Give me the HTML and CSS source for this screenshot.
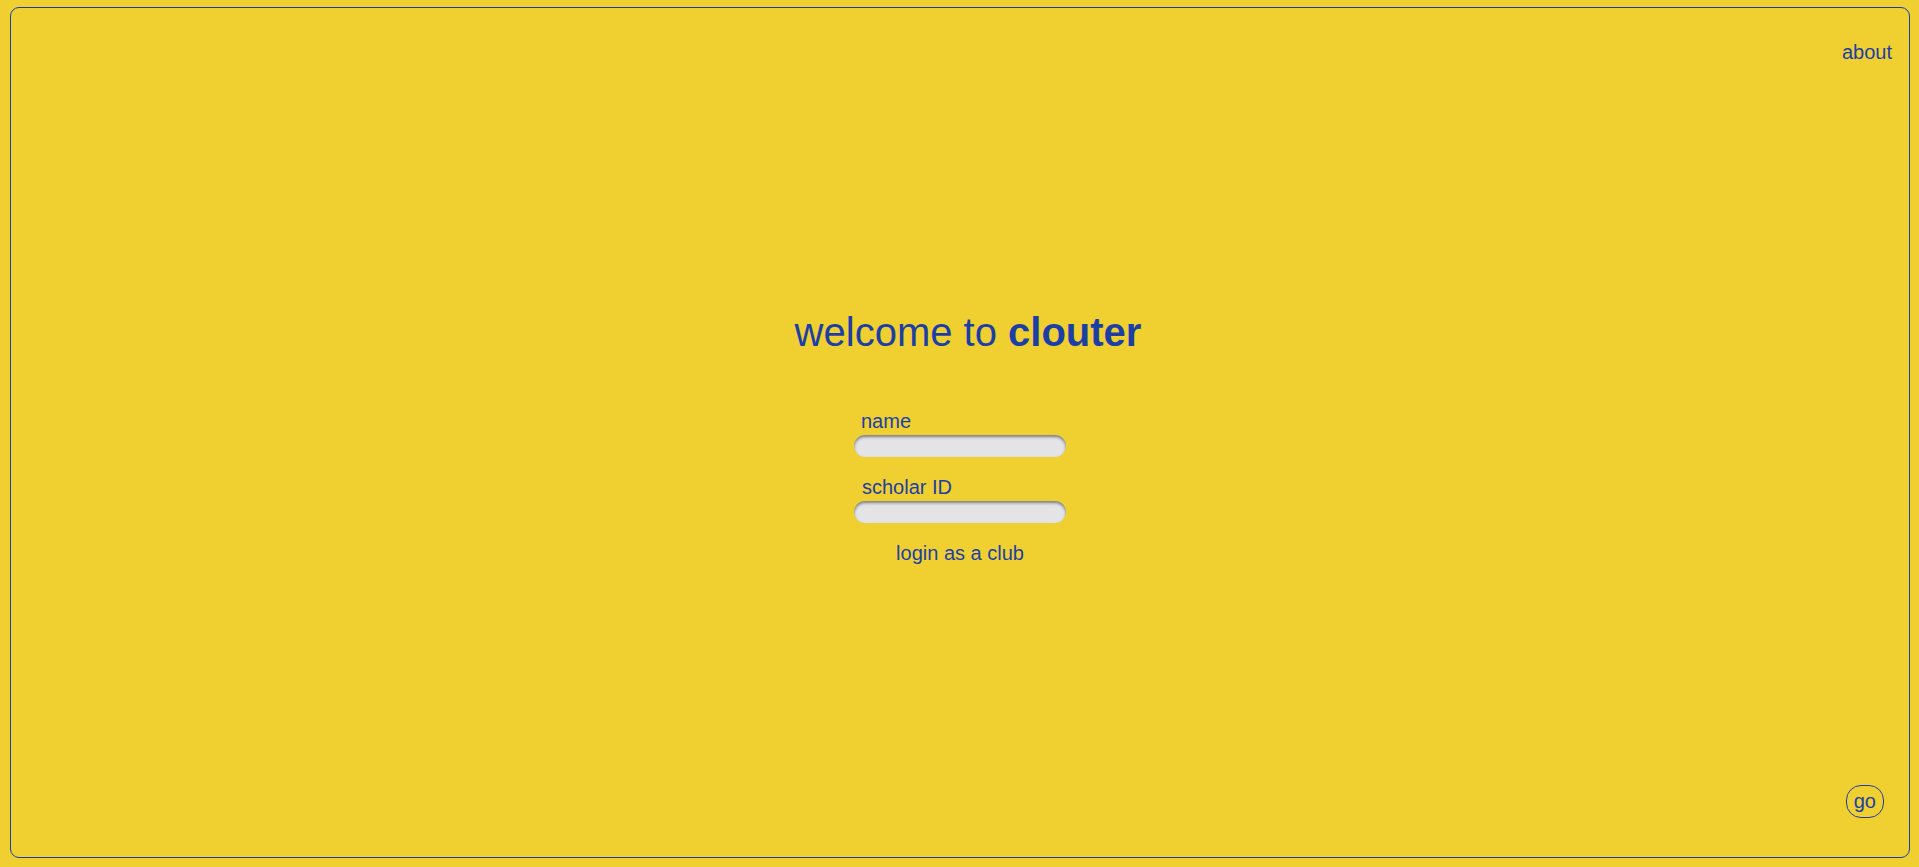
FILE: index.html
```html
<!DOCTYPE html>
<html lang="en">
<head>
<meta charset="utf-8">
<title>clouter</title>
<link rel="stylesheet" href="styles.css">
</head>
<body>
<div class="frame">
  <div class="top">
    <a class="about" href="#">about</a>
  </div>
  <main class="main">
    <h1 class="title">welcome to <b>clouter</b></h1>
    <form class="form">
      <label class="label label-name" for="name">name</label>
      <input class="field" id="name" type="text">
      <label class="label label-id" for="sid">scholar ID</label>
      <input class="field" id="sid" type="text">
      <a class="club" href="#">login as a club</a>
    </form>
  </main>
  <div class="bottom">
    <button class="go" type="button">go</button>
  </div>
</div>
</body>
</html>
```

FILE: styles.css
```css
html, body {
  margin: 0;
  padding: 0;
  background: #f0cf31;
}
body {
  font-family: "Liberation Sans", Arial, sans-serif;
  color: #1c3fa6;
  padding: 7px 9px 9px 10px;
  height: 867px;
  box-sizing: border-box;
  overflow: hidden;
}
.frame {
  height: 851px;
  box-sizing: border-box;
  border: 1px solid #1c3fa6;
  border-radius: 9px;
  display: flex;
  flex-direction: column;
}
.top {
  display: flex;
  justify-content: flex-end;
  padding: 33px 17px 0 0;
}
.about {
  font-size: 20px;
  line-height: 23px;
  color: #1c3fa6;
  text-decoration: none;
}
.main {
  flex: 1;
  display: flex;
  flex-direction: column;
  align-items: center;
  padding-top: 245px;
}
.title {
  margin: 0;
  padding-left: 16px;
  font-size: 40px;
  line-height: 46px;
  font-weight: normal;
}
.title b {
  font-weight: bold;
}
.form {
  margin-top: 55px;
  width: 212px;
  display: flex;
  flex-direction: column;
}
.label {
  font-size: 20px;
  line-height: 23px;
  margin-bottom: 2px;
}
.label-name {
  padding-left: 7px;
}
.label-id {
  padding-left: 8px;
  margin-top: 19px;
}
.field {
  height: 22px;
  width: 212px;
  box-sizing: border-box;
  border: none;
  border-radius: 11px;
  background: #e4e4e6;
  box-shadow: inset 0 2px 3px rgba(0, 0, 0, 0.45);
  outline: none;
  padding: 0 10px;
  margin: 0;
}
.club {
  margin-top: 19px;
  align-self: center;
  font-size: 20px;
  line-height: 23px;
  color: #1c3fa6;
  text-decoration: none;
}
.bottom {
  display: flex;
  justify-content: flex-end;
  padding: 0 25px 39px 0;
}
.go {
  font-family: "Liberation Sans", Arial, sans-serif;
  font-size: 20px;
  line-height: 23px;
  color: #1c3fa6;
  background: transparent;
  border: 1px solid #1c3fa6;
  border-radius: 15px;
  padding: 4px 7px;
  margin: 0;
}
```
